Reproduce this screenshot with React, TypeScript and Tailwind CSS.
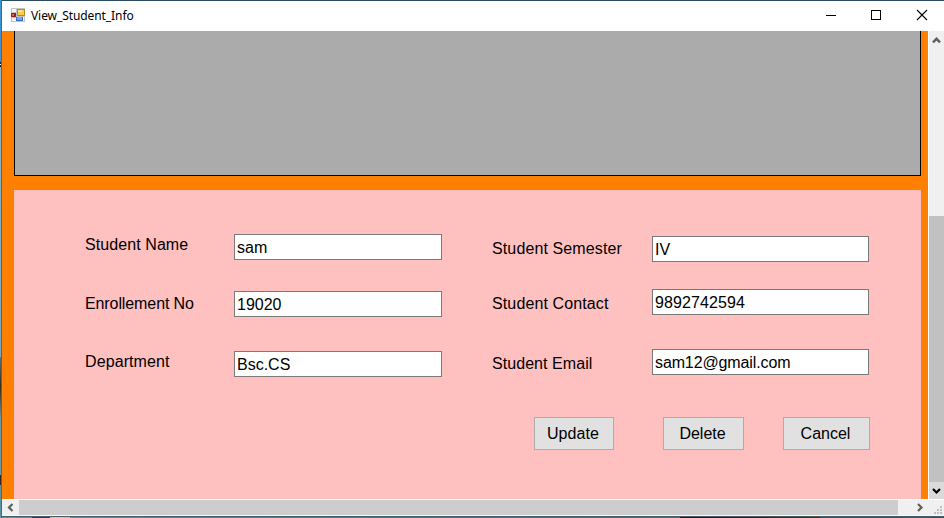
import type { ReactNode } from "react";

function Label({ className, children }: { className: string; children: ReactNode }) {
  return <div className={`h-5 whitespace-nowrap leading-5 ${className}`}>{children}</div>;
}

function Field({ className, value }: { className: string; value: string }) {
  return (
    <input
      defaultValue={value}
      className={`block h-[26px] w-full border border-[#7a7a7a] bg-white pl-[2px] pt-px text-black outline-none ${className}`}
    />
  );
}

function Button({ className, children }: { className: string; children: ReactNode }) {
  return (
    <button className={`h-[33px] border border-[#adadad] bg-[#e1e1e1] pr-[2px] leading-[31px] ${className}`}>
      {children}
    </button>
  );
}

function FormIcon() {
  return (
    <svg className="mb-[2px]" width="14" height="14" viewBox="0 0 14 14" shapeRendering="crispEdges">
      <rect x="0" y="0" width="14" height="14" fill="#c4c4c4" />
      <rect x="1" y="1" width="4" height="3" fill="#f5f5f5" />
      <rect x="1" y="10" width="4" height="3" fill="#f5f5f5" />
      <rect x="12" y="9" width="1" height="4" fill="#f5f5f5" />
      <rect x="0" y="5" width="5" height="4" fill="#9d1c14" />
      <rect x="1" y="6" width="2" height="2" fill="#e8604a" />
      <rect x="6" y="1" width="8" height="7" fill="#b98a1c" />
      <rect x="7" y="2" width="6" height="5" fill="#f7cf4e" />
      <rect x="7" y="2" width="4" height="2" fill="#fce48f" />
      <rect x="5" y="9" width="7" height="4" fill="#3569c4" />
      <rect x="6" y="9" width="5" height="3" fill="#79a7ee" />
    </svg>
  );
}

function TitleBar() {
  return (
    <header className="flex h-[30px] items-center bg-white pl-[9px]">
      <FormIcon />
      <span className="ml-[6px] flex-1 font-['Noto_Sans','Open_Sans',sans-serif] text-[12px] leading-[30px] tracking-[-0.08px]">
        View_Student_Info
      </span>
      <svg width="118" height="30" viewBox="826 1 118 30" fill="none" stroke="#000">
        <path d="M826 15.5h10" shapeRendering="crispEdges" />
        <path d="M871.5 10.5h9v9h-9z" shapeRendering="crispEdges" />
        <path d="M917 10l10 10M927 10l-10 10" strokeWidth="1.1" />
      </svg>
    </header>
  );
}

function VerticalScroll() {
  return (
    <div className="flex w-4 flex-col border-l border-white bg-[#f0f0f0]">
      <div className="h-[185px]">
        <svg width="15" height="17" viewBox="0 0 15 17">
          <path d="M4 11.3L7.5 7.8L11 11.3" fill="none" stroke="#606060" strokeWidth="2.4" />
        </svg>
      </div>
      <div className="h-[266px] bg-[#c1c1c1]" />
      <div className="h-[17px] bg-[#dadada]">
        <svg width="15" height="17" viewBox="0 0 15 17">
          <path d="M4 7L7.5 10.5L11 7" fill="none" stroke="#000" strokeWidth="2.2" />
        </svg>
      </div>
    </div>
  );
}

function HorizontalScroll() {
  return (
    <div className="flex h-[17px] border-y border-t-white border-b-[#f8f8f8] bg-[#f0f0f0]">
      <svg width="17" height="15" viewBox="0 0 17 15">
        <path d="M10.5 4L7 7.5L10.5 11" fill="none" stroke="#606060" strokeWidth="2.2" />
      </svg>
      <div className="w-[879px] bg-[#cdcdcd]" />
      <svg width="46" height="15" viewBox="898 500 46 15">
        <path d="M918 504l3.5 3.5l-3.5 3.5" fill="none" stroke="#606060" strokeWidth="2.2" />
        <path d="M940 506h2v2h-2zM937 509h2v2h-2zM940 509h2v2h-2zM934 512h2v2h-2zM937 512h2v2h-2zM940 512h2v2h-2z" fill="#bfbfbf" />
      </svg>
    </div>
  );
}

function DesktopEdge() {
  return (
    <div className="flex w-[2px] flex-col border-r border-[#426b80]">
      <div className="h-[62px] bg-[#3f91d0]" />
      <div className="h-[2px] bg-[#181c20]" />
      <div className="h-px bg-white" />
      <div className="h-[2px] bg-[#181c20]" />
      <div className="h-[290px] bg-linear-to-b from-[#8fb5cb] to-[#76a9c0]" />
      <div className="h-[60px] bg-linear-to-b from-[#5d6f78] via-[#33291f] to-[#6f8d98]" />
      <div className="h-[58px] bg-[#6797a5]" />
      <div className="h-[10px] bg-[#3a2418]" />
      <div className="flex-1 bg-[#5d929f]" />
    </div>
  );
}

function StudentForm() {
  return (
    <section className="h-[309px] bg-[#ffc0c0] pl-[71px]">
      <div className="flex h-[227px]">
        <div className="w-[149px]">
          <Label className="mt-[45px] tracking-[0.08px]">Student Name</Label>
          <Label className="mt-[39px] tracking-[-0.1px]">Enrollement No</Label>
          <Label className="mt-[38px] tracking-[0.1px]">Department</Label>
        </div>
        <div className="w-[208px]">
          <Field className="mt-[44px]" value="sam" />
          <Field className="mt-[31px]" value="19020" />
          <Field className="mt-[34px]" value="Bsc.CS" />
        </div>
        <div className="ml-[50px] w-[160px] tracking-[0.12px]">
          <Label className="mt-[49px]">Student Semester</Label>
          <Label className="mt-[35px]">Student Contact</Label>
          <Label className="mt-[40px] tracking-[0.06px]">Student Email</Label>
        </div>
        <div className="w-[217px]">
          <Field className="mt-[46px]" value="IV" />
          <Field className="mt-[27px] tracking-[0.1px]" value="9892742594" />
          <Field className="mt-[34px] tracking-[-0.12px]" value="sam12@gmail.com" />
        </div>
      </div>
      <div className="flex pl-[449px]">
        <Button className="w-[80px] tracking-[0.1px]">Update</Button>
        <Button className="ml-[49px] w-[81px]">Delete</Button>
        <Button className="ml-[39px] w-[87px]">Cancel</Button>
      </div>
    </section>
  );
}

export default function App() {
  return (
    <div className="flex h-[518px] w-[944px] overflow-hidden bg-white font-['Liberation_Sans',Arial,sans-serif] text-[16px] text-black">
      <DesktopEdge />
      <div className="flex flex-1 flex-col">
        <div className="h-px bg-[#2b4a66]" />
        <TitleBar />
        <div className="flex h-[468px]">
          <main className="w-[926px] bg-[#ff8000] pl-3 pr-[7px]">
            <div className="mb-[14px] h-[145px] border border-t-0 border-black bg-[#ababab]" />
            <StudentForm />
          </main>
          <VerticalScroll />
        </div>
        <HorizontalScroll />
        <div className="h-px bg-[#465b65]" />
        <div className="flex h-px">
          <div className="w-[30px] bg-[#5d929f]" />
          <div className="w-[18px] bg-[#273a73]" />
          <div className="w-[20px] bg-[#c5c5cb]" />
          <div className="w-[610px] bg-linear-to-r from-[#5d8f9f] via-[#3c7a98] to-[#4a6a7a]" />
          <div className="w-[140px] bg-linear-to-r from-[#15181c] to-[#4a2a1c]" />
          <div className="flex-1 bg-[#34566c]" />
        </div>
      </div>
    </div>
  );
}
